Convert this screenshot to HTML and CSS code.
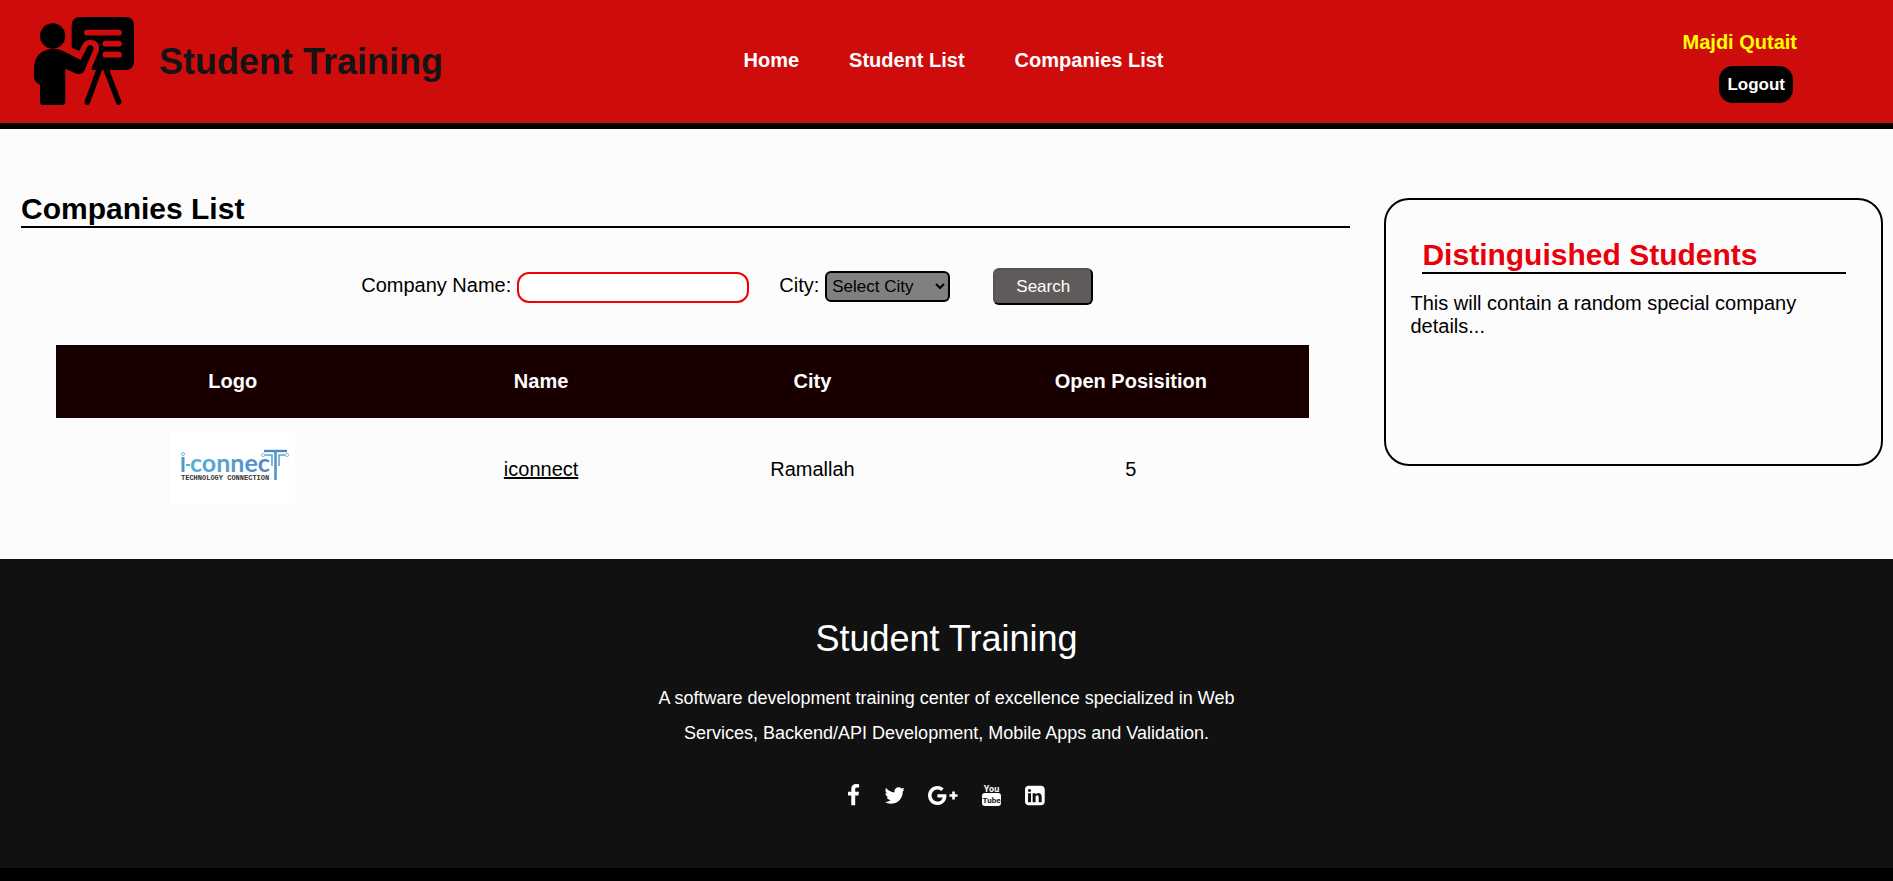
FILE: index.html
```html
<!DOCTYPE html>
<html lang="en">
<head>
<meta charset="utf-8">
<title>Student Training - Companies List</title>
<link rel="stylesheet" href="styles.css">
</head>
<body>
<header class="site-header">
  <div class="brand">
    <svg class="brand-icon" viewBox="102 51 300 264" aria-hidden="true">
      <circle cx="158" cy="108" r="38"/>
      <path d="M241 51H376Q402 51 402 77V184Q402 210 376 210H275V203L296 154C302 128 286 120 271 120C256 120 250 128 247 135L238 153L215 143V77Q215 51 241 51Z"/>
      <path d="M158 147C172 147 184 149 194 155L242 180L262 140C267 131 284 137 280 149L257 203C253 220 240 225 225 220L196 206V305Q196 315 186 315H130Q120 315 120 305V255Q102 247 102 228V205C102 170 125 147 158 147Z"/>
      <path class="brand-legs" d="M299 205L262 306M317 205L356 306"/>
      <path class="brand-lines" d="M261 98H357M316 131H357M316 164H357"/>
    </svg>
    <span class="brand-name">Student Training</span>
  </div>
  <nav class="main-nav">
    <a href="#">Home</a>
    <a href="#">Student List</a>
    <a href="#">Companies List</a>
  </nav>
  <div class="account">
    <a class="account-name" href="#">Majdi Qutait</a>
    <button class="logout" type="button">Logout</button>
  </div>
</header>

<main class="content">
  <section class="companies">
    <h1 class="heading">Companies List</h1>
    <form class="filters">
      <div class="field">
        <label for="company">Company Name:</label>
        <input class="text-input" id="company" type="text">
      </div>
      <div class="field">
        <label for="city">City:</label>
        <select class="city-select" id="city"><option>Select City</option></select>
      </div>
      <button class="search" type="button">Search</button>
    </form>
    <table class="company-table">
      <thead>
        <tr><th class="col-logo">Logo</th><th class="col-name">Name</th><th class="col-city">City</th><th class="col-open">Open Posisition</th></tr>
      </thead>
      <tbody>
        <tr>
          <td class="logo-cell">
            <svg class="company-logo" viewBox="0 0 125 73" role="img" aria-label="i-connect technology connection">
              <defs>
                <linearGradient id="blue" x1="0" y1="0" x2="1" y2="0">
                  <stop offset="0" stop-color="#4fb0d2"/><stop offset=".5" stop-color="#5a9fd0"/><stop offset="1" stop-color="#4a86c8"/>
                </linearGradient>
              </defs>
              <rect width="125" height="73" fill="#fff"/>
              <circle cx="13" cy="23" r="1.5" fill="none" stroke="#7fb9d6"/>
              <path d="M13 26V41" stroke="#4a9ccc" stroke-width="3"/>
              <path d="M16 34H20" stroke="#4fb0d2" stroke-width="2"/>
              <text class="logo-word" x="20" y="41" fill="url(#blue)">connec</text>
              <path d="M94 20H117" stroke="#4a86c8" stroke-width="2.4"/>
              <path d="M95 24H102V35M115 24H109V35" fill="none" stroke="#5aa6d2" stroke-width="1.6"/>
              <path d="M105.500 20V49" stroke="#4f92cc" stroke-width="2.6"/>
              <g fill="#fff" stroke="#8cc0da"><circle cx="93" cy="24" r="1.6"/><circle cx="117" cy="24" r="1.6"/></g>
              <text class="logo-tag" x="11" y="49">TECHNOLOGY CONNECTION</text>
            </svg>
          </td>
          <td><a class="company-link" href="#">iconnect</a></td>
          <td>Ramallah</td>
          <td>5</td>
        </tr>
      </tbody>
    </table>
  </section>

  <aside class="spotlight">
    <h2 class="heading spotlight-title">Distinguished Students</h2>
    <p class="spotlight-text">This will contain a random special company details...</p>
  </aside>
</main>

<footer class="site-footer">
  <h3 class="footer-title">Student Training</h3>
  <p class="footer-text">A software development training center of excellence specialized in Web Services, Backend/API Development, Mobile Apps and Validation.</p>
  <div class="socials">
    <a href="#" aria-label="Facebook"><svg viewBox="479 0 864 1792"><path d="M1343 12v264h-157q-86 0-116 36t-30 108v189h293l-39 296h-254v759h-306v-759h-255v-296h255v-218q0-186 104-288.500t277-102.500q147 0 228 12z"/></svg></a>
    <a href="#" aria-label="Twitter"><svg viewBox="64 0 1620 1792"><path d="M1684 408q-67 98-162 167 1 14 1 42 0 130-38 259.500t-115.500 248.500-184.500 210.500-258 146-323 54.500q-271 0-496-145 35 4 78 4 225 0 401-138-105-2-188-64.500t-114-159.500q33 5 61 5 43 0 85-11-112-23-185.500-111.500t-73.500-205.500v-4q68 38 146 41-66-44-105-115t-39-154q0-88 44-163 121 149 294.500 238.500t371.500 99.500q-8-38-8-74 0-134 94.500-228.500t228.500-94.500q140 0 236 102 109-21 205-78-37 115-142 178 93-10 186-50z"/></svg></a>
    <a href="#" aria-label="Google Plus"><svg viewBox="0 0 2304 1792"><path d="M1437 913q0 208-87 370.500t-248 254-369 91.500q-149 0-285-58t-234-156-156-234-58-285 58-285 156-234 234-156 285-58q286 0 491 192l-199 191q-117-113-292-113-123 0-227.500 62t-165.500 168.500-61 232.500 61 232.500 165.500 168.500 227.500 62q83 0 152.500-23t114.500-57.500 78.500-78.500 49-83 21.500-74h-416v-252h692q12 63 12 122zM2304 791v210h-209v209h-210v-209h-209v-210h209v-209h210v209h209z"/></svg></a>
    <a href="#" aria-label="YouTube"><svg viewBox="0 0 19 23"><rect y="9" width="19" height="13" rx="3"/><text class="yt-you" x="9.500" y="8">You</text><text class="yt-tube" x="9.500" y="19">Tube</text></svg></a>
    <a href="#" aria-label="LinkedIn"><svg viewBox="128 0 1536 1792"><path d="M365 1414h231v-694h-231v694zm246-908q-1-52-36-86t-93-34-94.500 34-36.500 86q0 51 35.500 85.500t92.500 34.500h1q59 0 95-34.500t36-85.500zm585 908h231v-398q0-154-73-233t-193-79q-136 0-209 117h2v-101h-231q3 66 0 694h231v-388q0-38 7-56 15-35 45-59.500t74-24.500q116 0 116 157v371zm468-998v960q0 119-84.500 203.500t-203.500 84.500h-960q-119 0-203.500-84.500t-84.500-203.500v-960q0-119 84.500-203.500t203.500-84.500h960q119 0 203.500 84.500t84.500 203.500z"/></svg></a>
  </div>
</footer>
</body>
</html>
```
FILE: styles.css
```css
* {
  box-sizing: border-box;
}

body {
  margin: 0;
  background: #000;
  color: #000;
  font-family: "Liberation Sans", Arial, sans-serif;
  font-size: 20px;
  line-height: 23px;
}

a {
  color: inherit;
  text-decoration: none;
}

/* Header */
.site-header {
  display: grid;
  grid-template-columns: 1fr auto 1fr;
  align-items: center;
  padding: 17px 96px 18px 34px;
  border-bottom: 6px solid #000;
  background: #cf0c0c;
}

.brand {
  display: flex;
  align-items: center;
  gap: 25px;
}

.brand-icon {
  width: 100px;
  height: 88px;
}

.brand-legs,
.brand-lines {
  fill: none;
  stroke: #000;
  stroke-width: 17px;
  stroke-linecap: round;
}

.brand-lines {
  stroke: #cf0c0c;
}

.brand-name {
  color: #141414;
  font-size: 36px;
  font-weight: bold;
  line-height: 41px;
}

.main-nav {
  display: flex;
  gap: 50px;
  padding: 0 0 2px 76px;
  color: #fff;
  font-weight: bold;
}

.account {
  display: flex;
  flex-direction: column;
  align-items: flex-end;
  gap: 12px;
  padding-top: 12px;
}

.account-name {
  color: #ff0;
  font-weight: bold;
}

.logout {
  margin-right: 4px;
  padding: 9px 8px;
  border: 0;
  border-radius: 14px;
  background: #000;
  color: #fff;
  font: bold 17px/19px "Liberation Sans", Arial, sans-serif;
}

/* Main content */
.content {
  display: grid;
  grid-template-columns: 8fr 3fr;
  align-items: start;
  gap: 34px;
  padding: 62px 10px 42px 21px;
  background: #fcfcfc;
}

.heading {
  margin: 0;
  border-bottom: 2px solid #000;
  font-size: 30px;
  font-weight: bold;
  line-height: 35px;
}

.filters {
  display: flex;
  justify-content: center;
  align-items: baseline;
  margin: 40px 0;
  padding-left: 83px;
}

.field {
  display: flex;
  align-items: baseline;
  gap: 6px;
  margin-right: 30px;
}

.text-input {
  width: 232px;
  height: 31px;
  padding: 2px 10px;
  border: 2px solid #f40000;
  border-radius: 12px;
  background: #fff;
  font: 17px "Liberation Sans", Arial, sans-serif;
}

.city-select {
  width: 125px;
  height: 31px;
  padding: 0 1px;
  border: 2px solid #000;
  border-radius: 6px;
  background: #808080;
  color: #000;
  font: 17px "Liberation Sans", Arial, sans-serif;
}

.search {
  width: 100px;
  margin-left: 13px;
  padding: 7px 0;
  border: 2px outset #000;
  border-radius: 6px;
  background: #605a5a;
  color: #fff;
  font: 17px/19px "Liberation Sans", Arial, sans-serif;
}

.company-table {
  width: calc(100% - 76px);
  margin-left: 35px;
  border-collapse: collapse;
  table-layout: fixed;
  text-align: center;
}

.company-table th {
  padding: 25px 0;
  background: #190000;
  color: #fff;
}

.company-table td {
  padding: 15px 0 12px;
}

.company-table .logo-cell {
  padding: 13px 0;
}

.col-logo {
  width: 28.2%;
}

.col-name {
  width: 21%;
}

.col-city {
  width: 22.3%;
}

.company-logo {
  display: block;
  width: 125px;
  height: 73px;
  margin: 0 auto;
}

.logo-word {
  font: bold 25px Lato, sans-serif;
}

.logo-tag {
  fill: #333;
  font: bold 7px "Liberation Mono", monospace;
}

.company-link {
  text-decoration: underline;
}

.spotlight {
  min-height: 268px;
  margin-top: 7px;
  padding: 37px 35px 24px 24px;
  border: 2px solid #000;
  border-radius: 25px;
}

.spotlight-title {
  margin-left: 12px;
  color: #e8000b;
}

.spotlight-text {
  margin: 18px 0 0;
}

/* Footer */
.site-footer {
  padding: 59px 20px 61px;
  background: #111;
  color: #fff;
  text-align: center;
}

.footer-title {
  margin: 0;
  font-size: 36px;
  font-weight: normal;
  line-height: 41px;
}

.footer-text {
  max-width: 600px;
  margin: 22px auto 33px;
  font-size: 18px;
  line-height: 35px;
}

.socials {
  display: flex;
  justify-content: center;
  gap: 24px;
}

.socials svg {
  display: block;
  height: 23px;
  fill: #fff;
}

.yt-you,
.yt-tube {
  font: bold 9px Roboto, "Liberation Sans", sans-serif;
  text-anchor: middle;
}

.yt-tube {
  fill: #111;
  font-size: 8px;
}
```
